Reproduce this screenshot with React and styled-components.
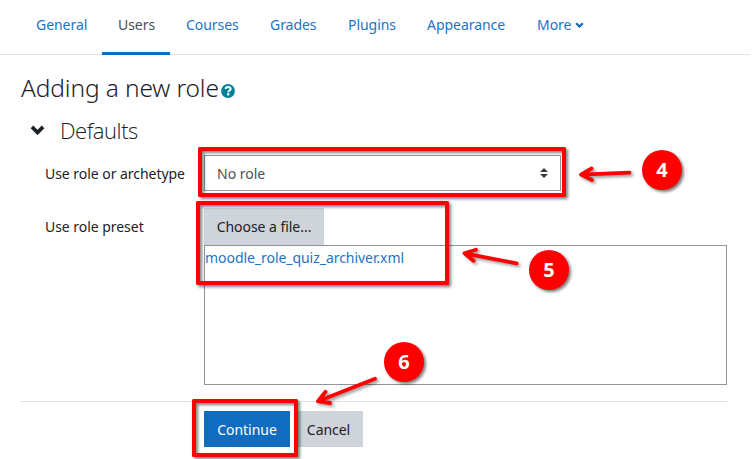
import React from "react";
import styled, { createGlobalStyle } from "styled-components";

const GlobalStyle = createGlobalStyle`
  *, *::before, *::after { box-sizing: border-box; }
  body {
    margin: 0;
    background: #fff;
    color: #1d2125;
    font: 400 15px/22.5px "Noto Sans", "Open Sans", sans-serif;
  }
`;

const Page = styled.div`
  position: relative;
  width: 756px;
  height: 459px;
  overflow: hidden;
`;

const Nav = styled.nav`
  display: flex;
  width: 750px;
  height: 55px;
  padding-left: 20px;
  border-bottom: 1px solid #dee2e6;
`;

const Tab = styled.a`
  flex: none;
  display: flex;
  align-items: center;
  gap: 4px;
  width: ${(p) => p.$width}px;
  height: 55px;
  padding: 0 0 2px 16px;
  font-size: 14px;
  letter-spacing: -0.04px;
  white-space: nowrap;
  color: ${(p) => (p.$active ? "#495057" : "#1b74c6")};
  border-bottom: 3px solid ${(p) => (p.$active ? "#0f6cbf" : "transparent")};
`;

const Main = styled.main`
  width: 727px;
  padding: 16px 0 0 20px;
`;

const Title = styled.h1`
  display: flex;
  align-items: center;
  gap: 2px;
  height: 34px;
  margin: 0;
  padding-left: 1px;
  font-family: "Noto Sans", "Open Sans", sans-serif;
  font-size: 24.5px;
  font-weight: 300;
  letter-spacing: -0.13px;
  line-height: 34px;
  white-space: nowrap;
`;

const SectionTitle = styled.h2`
  display: flex;
  align-items: center;
  gap: 15px;
  height: 34px;
  margin: 8px 0 0;
  padding-left: 10px;
  font-family: "Open Sans", "Noto Sans", sans-serif;
  font-size: 22px;
  font-weight: 300;
  letter-spacing: -0.45px;
`;

const HelpIcon = styled.svg`
  width: 14px;
  height: 14px;
  margin-top: 6px;
`;

const Row = styled.div`
  display: grid;
  grid-template-columns: 159px 1fr;
  padding-left: 25px;
  margin-top: ${(p) => p.$gap}px;
`;

const Label = styled.label`
  padding-top: 8px;
  font-size: 14px;
  letter-spacing: -0.04px;
  white-space: nowrap;
`;

const Select = styled.div`
  display: flex;
  align-items: center;
  justify-content: space-between;
  width: 357px;
  height: 36px;
  padding: 0 12px 0 12px;
  border: 1px solid #8f959e;
  color: #495057;
  font-size: 14px;
`;

const SelectValue = styled.span`
  padding-top: 2px;
`;

const Button = styled.button`
  display: flex;
  align-items: center;
  justify-content: center;
  width: ${(p) => p.$width}px;
  height: ${(p) => p.$height || 36}px;
  padding: ${(p) => (p.$height ? 1 : 2)}px 0 0;
  border: 0;
  font: inherit;
  font-size: 14px;
  letter-spacing: -0.04px;
  white-space: nowrap;
  background: ${(p) => (p.$primary ? "#0f6cbf" : "#ced4da")};
  color: ${(p) => (p.$primary ? "#fff" : "#1d2125")};
`;

const FileArea = styled.div`
  height: 140px;
  border: 1px solid #8f959e;
  color: #1b74c6;
  font-size: 14px;
  letter-spacing: -0.05px;
  padding: 1px 0 0;
`;

const Actions = styled.div`
  display: flex;
  gap: 4px;
  margin-top: 16px;
  padding: 9px 0 0 184px;
  border-top: 1px solid #dee2e6;
`;

const Highlight = styled.div`
  position: absolute;
  left: ${(p) => p.$x}px;
  top: ${(p) => p.$y}px;
  width: ${(p) => p.$w}px;
  height: ${(p) => p.$h}px;
  border: 4px solid #f00;
  border-radius: 1.5px;
  filter: drop-shadow(2px 2px 1.5px rgba(0, 0, 0, 0.5));
`;

const Badge = styled.div`
  position: absolute;
  left: ${(p) => p.$x - 20}px;
  top: ${(p) => p.$y - 20}px;
  width: 40px;
  height: 40px;
  border-radius: 50%;
  display: flex;
  align-items: center;
  justify-content: center;
  background: #f00;
  color: #fff;
  font: 700 20px/40px "Open Sans", "Noto Sans", sans-serif;
  box-shadow: 2px 2px 3px rgba(0, 0, 0, 0.5);
`;

const Arrows = styled.svg`
  position: absolute;
  left: 0;
  top: 0;
  pointer-events: none;
  filter: drop-shadow(2px 2px 1.5px rgba(0, 0, 0, 0.4));
`;

const tabs = [
  ["General", 82],
  ["Users", 68],
  ["Courses", 84],
  ["Grades", 78],
  ["Plugins", 79],
  ["Appearance", 110],
  ["More", 80],
];

const highlights = [
  [198, 147.4, 368, 49.6],
  [195.6, 201, 253.7, 83.6],
  [192, 398.5, 106, 58],
];

const badges = [
  [4, 662, 170],
  [5, 549, 270],
  [6, 404, 362],
];

const Chevron = ({ width, height, weight, color }) => (
  <svg width={width} height={height} viewBox="0 0 14 9">
    <path d="M1.8 1.8 7 7l5.2-5.2" fill="none" stroke={color} strokeWidth={weight} />
  </svg>
);

export default function App() {
  return (
    <Page>
      <GlobalStyle />
      <Nav>
        {tabs.map(([name, width]) => (
          <Tab key={name} $width={width} $active={name === "Users"}>
            {name}
            {name === "More" && <Chevron width={9} height={6} weight={3.3} color="#0f6cbf" />}
          </Tab>
        ))}
      </Nav>
      <Main>
        <Title>
          Adding a new role
          <HelpIcon viewBox="0 0 14 14">
            <circle cx="7" cy="7" r="6.9" fill="#008196" />
            <path
              d="M4.5 5C4.8 3.6 5.8 3 7.1 3c1.5 0 2.5.8 2.5 1.9 0 1.6-2.3 1.6-2.3 3.3"
              fill="none"
              stroke="#fff"
              strokeWidth="2.1"
            />
            <path d="M6.1 9.2h2.3v2.2H6.1z" fill="#fff" />
          </HelpIcon>
        </Title>
        <SectionTitle>
          <Chevron width={15} height={9.6} weight={3.5} color="#1d2125" />
          Defaults
        </SectionTitle>
        <Row $gap={8}>
          <Label>Use role or archetype</Label>
          <Select>
            <SelectValue>No role</SelectValue>
            <svg width="8" height="10" viewBox="0 0 8 10">
              <path d="M4 0 8 4H0zM0 6h8L4 10z" fill="#343a40" />
            </svg>
          </Select>
        </Row>
        <Row $gap={17}>
          <Label>Use role preset</Label>
          <div>
            <Button $width={120} $height={37}>Choose a file...</Button>
            <FileArea>moodle_role_quiz_archiver.xml</FileArea>
          </div>
        </Row>
        <Actions>
          <Button $primary $width={86}>Continue</Button>
          <Button $width={69}>Cancel</Button>
        </Actions>
      </Main>
      {highlights.map(([x, y, w, h]) => (
        <Highlight key={y} $x={x} $y={y} $w={w} $h={h} />
      ))}
      <Arrows width="756" height="459" fill="none" stroke="#f00" strokeWidth="3.8" strokeLinecap="round" strokeLinejoin="round">
        <path d="M629.5 172.7 581 174.6M591.5 168.5 581 174.6 592 180" />
        <path d="M516.5 263.3 464.5 253.3M476 249.7 464.5 253.3 473.5 260.7" />
        <path d="M375 378.7 318 401.2M325.5 391.8 318 401.2 330 403" />
      </Arrows>
      {badges.map(([n, x, y]) => (
        <Badge key={n} $x={x} $y={y}>{n}</Badge>
      ))}
    </Page>
  );
}
